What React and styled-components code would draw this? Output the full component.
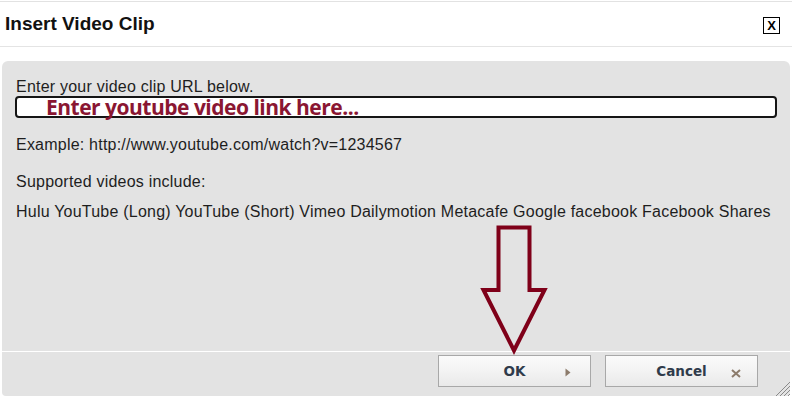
import React from "react";
import styled, { createGlobalStyle } from "styled-components";

const GlobalStyle = createGlobalStyle`
  html, body { margin: 0; padding: 0; background: #ffffff; }
  body { font-family: "Liberation Sans", Arial, sans-serif; color: #222; }
  * { box-sizing: border-box; }
`;

const Dialog = styled.div`
  position: relative;
  width: 792px;
  height: 398px;
  display: flex;
  flex-direction: column;
  background: #fff;
`;

const Header = styled.div`
  margin-top: 1px;
  height: 46px;
  border-top: 1px solid #e2e2e2;
  border-bottom: 1px solid #e4e4e4;
  display: flex;
  align-items: center;
  justify-content: space-between;
  padding: 0 12px 0 5px;
`;

const Title = styled.h1`
  margin: 0;
  font-family: "Liberation Sans", Arial, sans-serif;
  font-size: 19px;
  line-height: 22px;
  font-weight: 700;
  color: #111;
`;

const CloseButton = styled.button`
  width: 17px;
  height: 17px;
  margin-top: 3px;
  padding: 0;
  border: 1px solid #000;
  background: #fff;
  font-family: "Liberation Sans", Arial, sans-serif;
  font-weight: 700;
  font-size: 13px;
  line-height: 15px;
  color: #000;
  text-align: center;
  cursor: pointer;
`;

const Panel = styled.div`
  flex: 1;
  margin: 14px 2px 2px 2px;
  background: #e3e3e3;
  border-radius: 6px 6px 4px 4px;
  display: flex;
  flex-direction: column;
`;

const Body = styled.div`
  flex: 1;
  padding: 17px 13px 0 14px;
`;

const Text = styled.p`
  margin: ${(p) => p.$mt || 0}px 0 0 0;
  font-family: "Liberation Sans", Arial, sans-serif;
  font-size: 16px;
  line-height: 18px;
  letter-spacing: 0.22px;
  color: #1e1e1e;
  white-space: nowrap;
`;

const FieldWrap = styled.div`
  position: relative;
  margin: 0 0 0 -1px;
`;

const UrlInput = styled.input`
  display: block;
  width: 762px;
  height: 22px;
  border: 2px solid #151515;
  border-radius: 4px;
  background: #fff;
  outline: none;
  padding: 0 4px;
`;

const Annotation = styled.span`
  position: absolute;
  left: 31px;
  top: 1px;
  font-family: "Open Sans", "Noto Sans", sans-serif;
  font-weight: 700;
  font-size: 21px;
  line-height: 20px;
  letter-spacing: -0.5px;
  color: #8a1632;
  white-space: nowrap;
  pointer-events: none;
`;

const Footer = styled.div`
  border-top: 1px solid #ffffff;
  height: 45px;
  display: flex;
  justify-content: flex-end;
  align-items: flex-start;
  gap: 14px;
  padding: 3px 32px 0 0;
  position: relative;
`;

const Button = styled.button`
  position: relative;
  width: 153px;
  height: 32px;
  border: 1px solid #a8a8a8;
  background: linear-gradient(to bottom, #fbfbfb 0%, #f3f3f3 50%, #e9e9e9 100%);
  font-family: "DejaVu Sans", Tahoma, sans-serif;
  font-weight: 700;
  font-size: 13.5px;
  color: #2f3b4b;
  text-align: center;
  padding: 0;
  cursor: pointer;
`;

const ButtonIcon = styled.span`
  position: absolute;
  right: ${(p) => p.$right}px;
  top: ${(p) => p.$top}px;
  display: block;
  line-height: 0;
`;

const Grip = styled.svg`
  position: absolute;
  right: 0;
  bottom: 0;
`;

const Arrow = styled.svg`
  position: absolute;
  left: 478px;
  top: 222px;
  pointer-events: none;
`;

export default function App() {
  return (
    <>
      <GlobalStyle />
      <Dialog>
        <Header>
          <Title>Insert Video Clip</Title>
          <CloseButton>X</CloseButton>
        </Header>
        <Panel>
          <Body>
            <Text>Enter your video clip URL below.</Text>
            <FieldWrap>
              <UrlInput type="text" aria-label="Video clip URL" />
              <Annotation>Enter youtube video link here...</Annotation>
            </FieldWrap>
            <Text $mt={18}>Example: http://www.youtube.com/watch?v=1234567</Text>
            <Text $mt={19}>Supported videos include:</Text>
            <Text $mt={12}>
              Hulu YouTube (Long) YouTube (Short) Vimeo Dailymotion Metacafe Google facebook Facebook Shares
            </Text>
          </Body>
          <Footer>
            <Button>
              OK
              <ButtonIcon $right={19} $top={12}>
                <svg width="6" height="9" viewBox="0 0 6 9">
                  <path d="M0.5 0.5 L5.5 4.5 L0.5 8.5 Z" fill="#8c7b6b" />
                </svg>
              </ButtonIcon>
            </Button>
            <Button>
              Cancel
              <ButtonIcon $right={16} $top={13}>
                <svg width="10" height="9" viewBox="0 0 10 9">
                  <path d="M1 1 L9 8 M9 1 L1 8" stroke="#8c7b6b" strokeWidth="2" />
                </svg>
              </ButtonIcon>
            </Button>
            <Grip width="17" height="14" viewBox="0 0 17 14">
              <path d="M3 14 L17 0 M7 14 L17 4 M11 14 L17 8 M15 14 L17 12" stroke="#8a8a8a" strokeWidth="1" />
            </Grip>
          </Footer>
        </Panel>
        <Arrow width="72" height="136" viewBox="478 222 72 136">
          <path
            d="M498.5 227.5 L529.5 227.5 L529.5 290 L544.5 290 L514 350.5 L483.5 290 L498.5 290 Z"
            fill="none"
            stroke="#7f0019"
            strokeWidth="4"
            strokeLinejoin="miter"
          />
        </Arrow>
      </Dialog>
    </>
  );
}
